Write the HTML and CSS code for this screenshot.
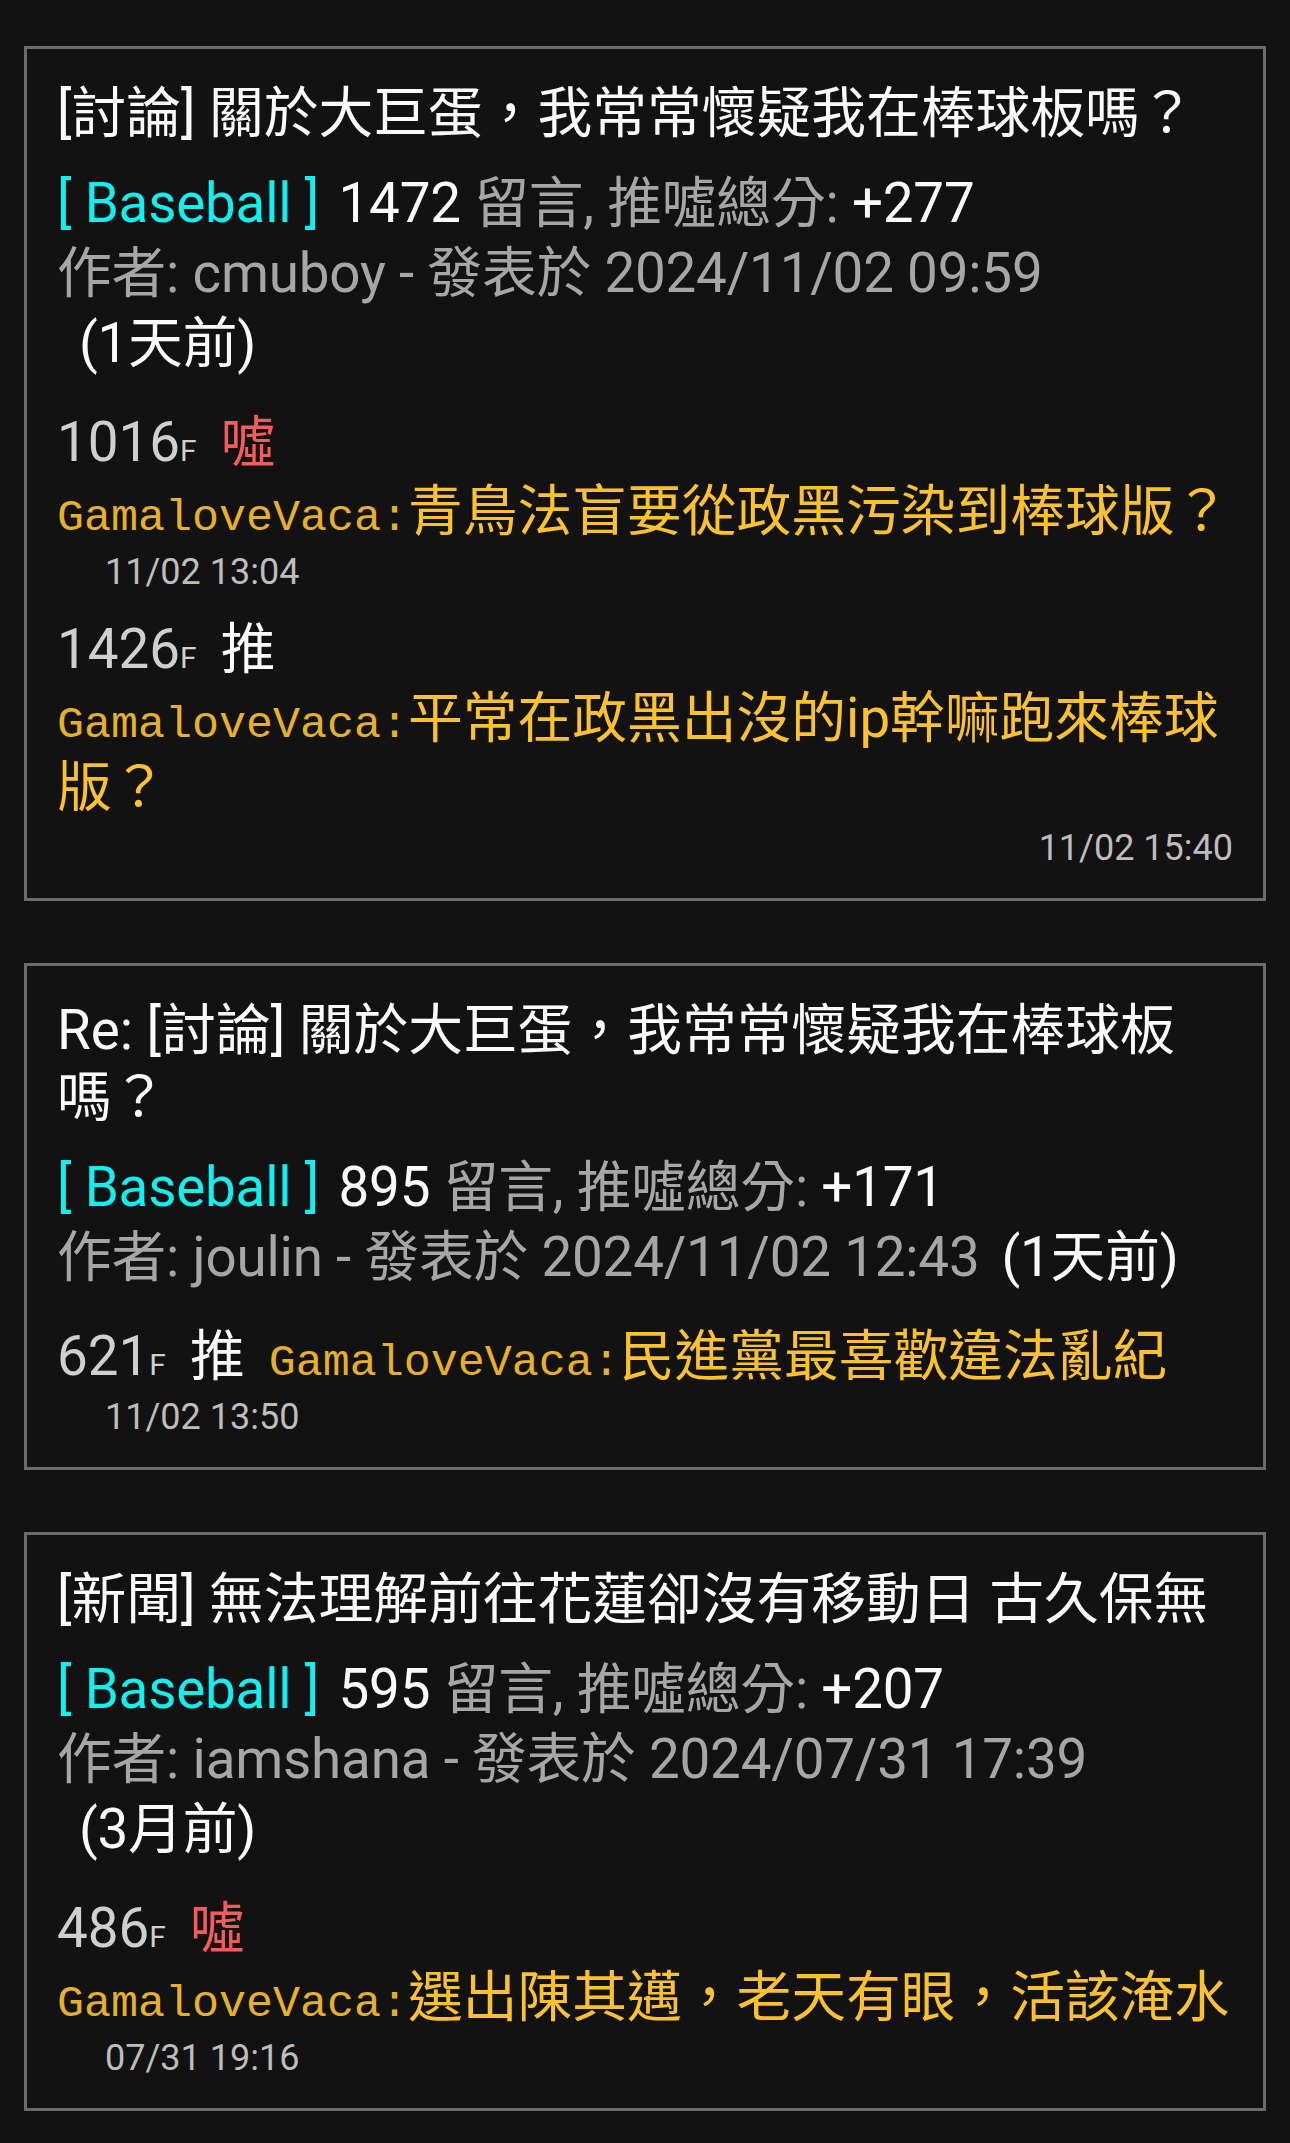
FILE: index.html
```html
<!DOCTYPE html>
<html lang="zh-Hant-TW">
<head>
<meta charset="utf-8">
<title>PTT 推文搜尋</title>
<link rel="stylesheet" href="styles.css">
</head>
<body>
<main class="list">
  <article class="card">
    <h2 class="title">[討論] 關於大巨蛋，我常常懷疑我在棒球板嗎？</h2>
    <div class="meta">
      <div class="meta-line"><span class="board">[ Baseball ]</span> <span class="hl">1472</span> 留言, 推噓總分: <span class="hl">+277</span></div>
      <div class="meta-line">作者: cmuboy - 發表於 2024/11/02 09:59<wbr><span class="ago">(1天前)</span></div>
    </div>
    <div class="comments">
      <div class="comment">
        <div class="row">
          <div class="floor"><span class="fnum">1016</span><span class="f">F</span><span class="tag boo">噓</span></div>
          <div class="body"><span class="author">GamaloveVaca:</span><span class="text">青鳥法盲要從政黑污染到棒球版？</span></div>
        </div>
        <div class="time">11/02 13:04</div>
      </div>
      <div class="comment">
        <div class="row">
          <div class="floor"><span class="fnum">1426</span><span class="f">F</span><span class="tag push">推</span></div>
          <div class="body"><span class="author">GamaloveVaca:</span><span class="text">平常在政黑出沒的ip幹嘛跑來棒球版？</span></div>
        </div>
        <div class="time time-right">11/02 15:40</div>
      </div>
    </div>
  </article>

  <article class="card">
    <h2 class="title">Re: [討論] 關於大巨蛋，我常常懷疑我在棒球板嗎？</h2>
    <div class="meta">
      <div class="meta-line"><span class="board">[ Baseball ]</span> <span class="hl">895</span> 留言, 推噓總分: <span class="hl">+171</span></div>
      <div class="meta-line">作者: joulin - 發表於 2024/11/02 12:43<wbr><span class="ago">(1天前)</span></div>
    </div>
    <div class="comments">
      <div class="comment">
        <div class="row">
          <div class="floor"><span class="fnum">621</span><span class="f">F</span><span class="tag push">推</span></div>
          <div class="body"><span class="author">GamaloveVaca:</span><span class="text">民進黨最喜歡違法亂紀</span></div>
        </div>
        <div class="time">11/02 13:50</div>
      </div>
    </div>
  </article>

  <article class="card">
    <h2 class="title">[新聞] 無法理解前往花蓮卻沒有移動日 古久保無</h2>
    <div class="meta">
      <div class="meta-line"><span class="board">[ Baseball ]</span> <span class="hl">595</span> 留言, 推噓總分: <span class="hl">+207</span></div>
      <div class="meta-line">作者: iamshana - 發表於 2024/07/31 17:39<wbr><span class="ago">(3月前)</span></div>
    </div>
    <div class="comments">
      <div class="comment">
        <div class="row">
          <div class="floor"><span class="fnum">486</span><span class="f">F</span><span class="tag boo">噓</span></div>
          <div class="body"><span class="author">GamaloveVaca:</span><span class="text">選出陳其邁，老天有眼，活該淹水</span></div>
        </div>
        <div class="time">07/31 19:16</div>
      </div>
    </div>
  </article>
</main>
</body>
</html>
```

FILE: styles.css
```css
* {
  box-sizing: border-box;
}

html, body {
  margin: 0;
  padding: 0;
  background: #121212;
}

body {
  font-family: Roboto, "Noto Sans CJK TC", "Noto Sans", sans-serif;
  font-size: 54.75px;
  color: #fafafa;
}

.list {
  display: flex;
  flex-direction: column;
  gap: 62px;
  padding: 46px 24px 35px;
}

.card {
  border: 3px solid #6b6b6b;
  padding: 31px 30px 28px;
  background: #121212;
}

.title {
  margin: 0 0 21px;
  font-size: 54.75px;
  font-weight: 400;
  line-height: 67px;
  color: #fafafa;
}

.meta {
  line-height: 70px;
  color: #a6a6a6;
  letter-spacing: -0.2px;
}

.meta-line {
  margin: 0;
}

.board {
  color: #14eeee;
  margin-right: 6px;
}

.hl {
  color: #fafafa;
}

.ago {
  display: inline-block;
  margin-left: 22px;
  color: #fafafa;
}

.comments {
  margin-top: 30px;
  display: flex;
  flex-direction: column;
  gap: 21px;
}

.row {
  display: flex;
  flex-wrap: wrap;
  align-items: baseline;
  column-gap: 24px;
  line-height: 69px;
}

.floor {
  white-space: nowrap;
  color: #cfcfcf;
}

.f {
  font-size: 30px;
  line-height: 1;
}

.tag {
  margin-left: 24px;
}

.tag.push {
  color: #fafafa;
}

.tag.boo {
  color: #f25c5c;
}

.body {
  flex: 0 1 auto;
  min-width: 0;
  color: #fcc12e;
}

.author {
  font-family: "Liberation Mono", "DejaVu Sans Mono", monospace;
  font-size: 45px;
  line-height: 1;
  color: #e6b02b;
}

.time {
  margin-top: 4px;
  padding-left: 48px;
  font-size: 36px;
  line-height: 44px;
  color: #bdbdbd;
}

.time-right {
  padding-left: 0;
  text-align: right;
}
```
